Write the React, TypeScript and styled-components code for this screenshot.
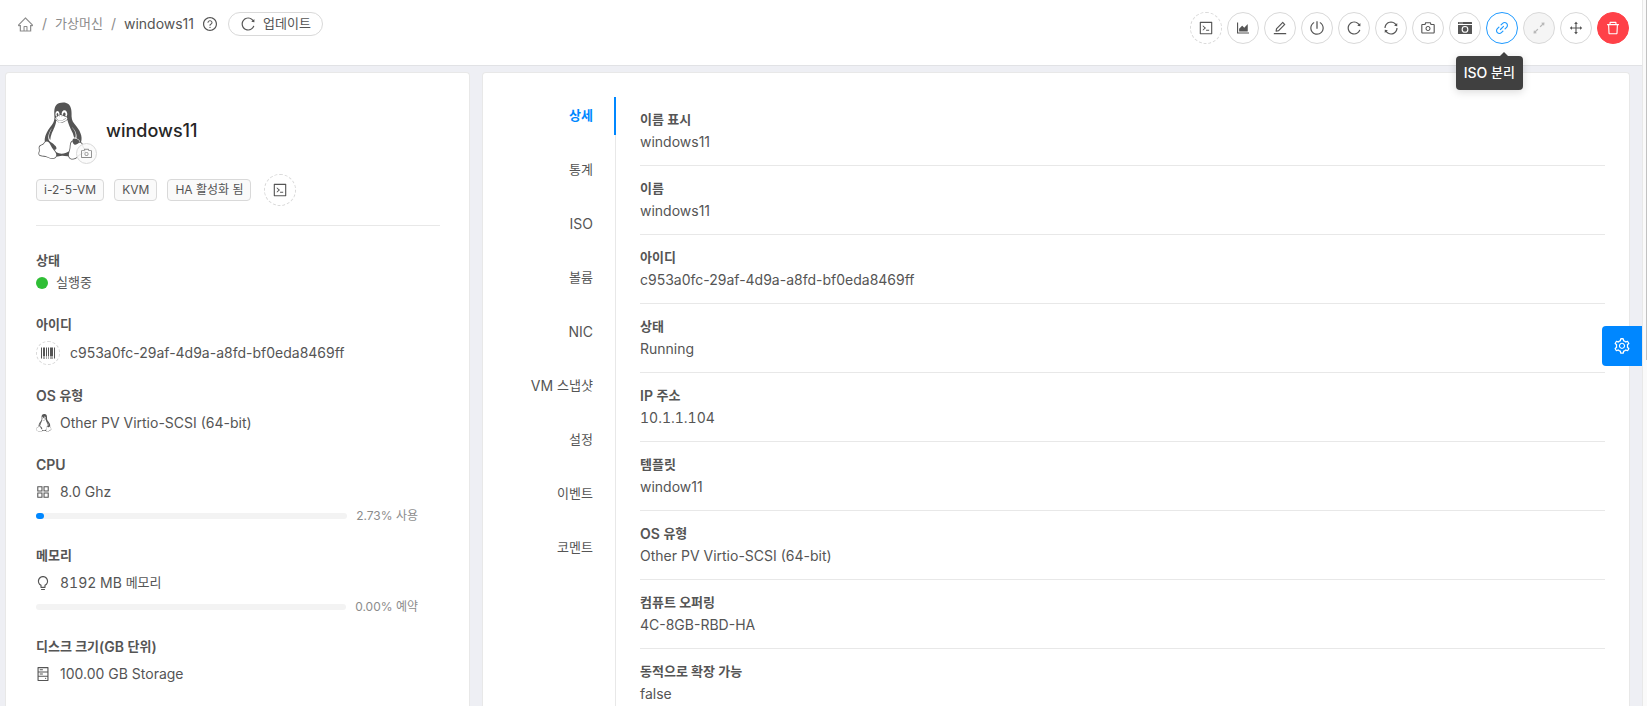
import React from 'react';
import styled, { createGlobalStyle, css } from 'styled-components';
import {
  AiOutlineHome, AiOutlineQuestionCircle, AiOutlineReload, AiOutlineCode, AiOutlineAreaChart,
  AiOutlineEdit, AiOutlinePoweroff, AiOutlineSync, AiOutlineCamera, AiOutlineLink,
  AiOutlineArrowsAlt, AiOutlineDrag, AiOutlineDelete, AiOutlineSetting, AiOutlineBarcode,
  AiOutlineAppstore, AiOutlineBulb, AiOutlineHdd,
} from 'react-icons/ai';
import { FaLinux } from 'react-icons/fa';

const colors = {
  text: '#555',
  muted: '#8c8c8c',
  strong: '#262626',
  primary: '#0087ff',
  danger: '#ff4148',
  border: '#d9d9d9',
  line: '#e8e8e8',
  page: '#eeeff4',
};

const GlobalStyle = createGlobalStyle`
  *, *::before, *::after { box-sizing: border-box; }
  body {
    margin: 0;
    background: #fff;
    color: ${colors.text};
    font: 14px/22px Inter, "Noto Sans CJK KR", sans-serif;
    overflow: hidden;
  }
  button { font: inherit; color: inherit; cursor: pointer; padding: 0; }
  a { color: inherit; text-decoration: none; }
  h1, dl, dt, dd { margin: 0; padding: 0; font: inherit; }
  svg { display: block; flex: none; }
`;

const Viewport = styled.div`
  display: flex;
  height: 100vh;
  overflow: hidden;
`;

const Page = styled.div`
  position: relative;
  flex: 1;
  min-width: 0;
  display: flex;
  flex-direction: column;
  background: ${colors.page};
`;

const ScrollTrack = styled.div`
  flex: none;
  width: 5px;
  background: #fafafa;
  border-left: 1px solid ${colors.line};
  display: flex;
  justify-content: flex-end;
`;

const ScrollThumb = styled.div`
  width: 1px;
  height: 51%;
  background: #c1c1c1;
`;

const Header = styled.header`
  display: flex;
  justify-content: space-between;
  align-items: flex-start;
  height: 66px;
  padding: 12px 13px 0 17px;
  background: #fff;
  border-bottom: 1px solid #e1e2e5;
`;

const Breadcrumb = styled.nav`
  display: flex;
  align-items: center;
  color: ${colors.muted};
  height: 24px;
  gap: 8px;
`;

const Current = styled.span`
  color: ${colors.text};
`;

const HelpLink = styled.a`
  color: ${colors.text};
`;

const UpdateButton = styled.button`
  display: flex;
  align-items: center;
  gap: 7px;
  height: 24px;
  margin-left: 2px;
  padding: 0 11px;
  border: 1px solid ${colors.border};
  border-radius: 12px;
  background: #fff;
  color: ${colors.text};
`;

const Hangul = styled.span`
  font-size: 13px;
  line-height: 1;
  vertical-align: 1px;
`;

const Actions = styled.div`
  display: flex;
  gap: 5px;
`;

type Kind = 'dashed' | 'active' | 'disabled' | 'danger';

const CircleButton = styled.button<{ $kind?: Kind; $size?: number }>`
  position: relative;
  display: flex;
  flex: none;
  align-items: center;
  justify-content: center;
  width: ${p => p.$size ?? 32}px;
  height: ${p => p.$size ?? 32}px;
  border: 1px solid ${colors.border};
  border-radius: 50%;
  background: #fff;
  ${p => p.$kind === 'dashed' && css`border-style: dashed;`}
  ${p => p.$kind === 'active' && css`border-color: #1f9aff; color: #1f9aff;`}
  ${p => p.$kind === 'disabled' && css`background: #f5f5f5; color: #b8b8b8;`}
  ${p => p.$kind === 'danger' && css`background: ${colors.danger}; border-color: ${colors.danger}; color: #fff;`}
`;

const Tooltip = styled.span`
  position: absolute;
  z-index: 2;
  top: 43px;
  right: -6px;
  height: 34px;
  padding: 6px 8px;
  border-radius: 4px;
  background: #404040;
  color: #fff;
  font-weight: 500;
  white-space: nowrap;
  box-shadow: 0 2px 8px rgba(0, 0, 0, 0.15);
  &::before {
    content: '';
    position: absolute;
    top: -4px;
    right: 15px;
    border: solid transparent;
    border-width: 0 4px 4px;
    border-bottom-color: #404040;
  }
`;

const Body = styled.main`
  flex: 1;
  min-height: 0;
  display: grid;
  grid-template-columns: minmax(0, 465fr) minmax(0, 1148fr);
  gap: 12px;
  padding: 6px 12px 0 5px;
`;

const Card = styled.section`
  overflow: hidden;
  background: #fff;
  border: 1px solid ${colors.line};
  border-bottom: 0;
  border-radius: 4px 4px 0 0;
`;

const InfoCard = styled(Card)`
  padding: 28px 29px 0 30px;
`;

const Identity = styled.div`
  display: flex;
  align-items: center;
  gap: 9px;
  height: 60px;
`;

const Avatar = styled.div`
  position: relative;
  width: 61px;
  height: 60px;
  padding: 1px 0 0 1px;
`;

const Penguin = styled(FaLinux)`
  width: 50px;
  height: 58px;
`;

const SmallPenguin = styled(FaLinux)`
  width: 16px;
  height: 18px;
`;

const AvatarBadge = styled.button`
  position: absolute;
  right: 0;
  bottom: -3px;
  display: flex;
  align-items: center;
  justify-content: center;
  width: 21px;
  height: 21px;
  border: 1px solid ${colors.border};
  border-radius: 50%;
  background: rgba(250, 250, 250, 0.85);
  color: ${colors.muted};
`;

const Name = styled.h1`
  color: ${colors.strong};
  font-size: 18px;
  font-weight: 500;
`;

const Tags = styled.div`
  display: flex;
  align-items: center;
  gap: 10px;
  padding: 13px 0 19px;
  border-bottom: 1px solid ${colors.line};
`;

const Tag = styled.span`
  height: 22px;
  padding: 0 7px;
  border: 1px solid ${colors.border};
  border-radius: 4px;
  background: #fafafa;
  font-size: 12px;
  line-height: 20px;
  & + button { margin-left: 3px; }
`;

const Facts = styled.dl`
  padding-top: 24px;
  display: flex;
  flex-direction: column;
  gap: 20px;
`;

const Label = styled.dt`
  font-weight: 600;
`;

const Value = styled.dd<{ $gap: number; $top?: number }>`
  display: flex;
  align-items: center;
  gap: ${p => p.$gap}px;
  padding-top: ${p => p.$top ?? 0}px;
`;

const IconSlot = styled.span`
  display: flex;
  justify-content: center;
  width: 14px;
`;

const Numeric = styled.span`
  font-variant-numeric: tabular-nums;
`;

const Dot = styled.span`
  width: 12px;
  height: 12px;
  border-radius: 50%;
  background: #2fbe35;
`;

const Usage = styled.dd`
  display: flex;
  align-items: center;
  gap: 9px;
  padding: 4px 22px 0 0;
  color: ${colors.muted};
  font-size: 12px;
  line-height: 18px;
`;

const Track = styled.div`
  flex: 1;
  height: 6px;
  border-radius: 3px;
  background: #f3f3f3;
`;

const Fill = styled.div`
  height: 6px;
  border-radius: 3px;
  background: ${colors.primary};
`;

const DetailCard = styled(Card)`
  display: flex;
  padding-top: 24px;
`;

const Tabs = styled.div`
  flex: none;
  width: 133px;
  display: flex;
  flex-direction: column;
  gap: 16px;
  border-right: 1px solid ${colors.line};
`;

const Tab = styled.button<{ $active?: boolean }>`
  height: 38px;
  margin-right: -1px;
  padding-right: 21px;
  border: 0;
  border-right: 2px solid ${p => (p.$active ? colors.primary : 'transparent')};
  background: none;
  color: ${p => (p.$active ? colors.primary : colors.text)};
  font-weight: ${p => (p.$active ? 600 : 400)};
  text-align: right;
`;

const Details = styled.dl`
  flex: 1;
  min-width: 0;
  padding: 0 24px;
`;

const Detail = styled.div`
  padding: 12px 0;
  border-bottom: 1px solid ${colors.line};
`;

const SettingsButton = styled.button`
  position: absolute;
  right: 0;
  top: 326px;
  display: flex;
  align-items: center;
  justify-content: center;
  width: 40px;
  height: 40px;
  border: 0;
  border-radius: 4px 0 0 4px;
  background: ${colors.primary};
  color: #fff;
`;

/* Hangul is set one pixel smaller than the Latin text around it. */
const Text = ({ children }: { children: string }) => (
  <>
    {children.split(/([가-힣]+(?: [가-힣]+)*)/).map((part, i) =>
      i % 2 ? <Hangul key={i}>{part}</Hangul> : part)}
  </>
);

const WindowCamera = () => (
  <svg width="14" height="14" viewBox="0 0 14 14" fill="currentColor" aria-hidden="true">
    <path d="M.5 1h13a.5.5 0 0 1 .5.5V3H0V1.500A.5.5 0 0 1 .5 1z" />
    <path fillRule="evenodd" d="M0 4h14v8.500a.5.5 0 0 1-.5.5H.5a.5.5 0 0 1-.5-.5zM7 5a3.400 3.400 0 1 0 0 6.800a3.400 3.400 0 0 0 0-6.800zM7 6.100a2.300 2.300 0 1 1 0 4.600a2.300 2.300 0 0 1 0-4.600z" />
    <path d="M1.500 1.500h1v1h-1zM3.500 1.500h1v1h-1z" fill="#fff" />
  </svg>
);

const actions: { label: string; icon: React.ReactNode; kind?: Kind }[] = [
  { label: '콘솔', icon: <AiOutlineCode size={16} />, kind: 'dashed' },
  { label: '통계', icon: <AiOutlineAreaChart size={16} /> },
  { label: '편집', icon: <AiOutlineEdit size={16} /> },
  { label: '정지', icon: <AiOutlinePoweroff size={16} /> },
  { label: '재부팅', icon: <AiOutlineReload size={16} /> },
  { label: '재설치', icon: <AiOutlineSync size={16} /> },
  { label: '스냅샷', icon: <AiOutlineCamera size={16} /> },
  { label: '볼륨 스냅샷', icon: <WindowCamera /> },
  { label: 'ISO 분리', icon: <AiOutlineLink size={16} />, kind: 'active' },
  { label: '확장', icon: <AiOutlineArrowsAlt size={16} />, kind: 'disabled' },
  { label: '이동', icon: <AiOutlineDrag size={16} /> },
  { label: '삭제', icon: <AiOutlineDelete size={16} />, kind: 'danger' },
];

const tabs = ['상세', '통계', 'ISO', '볼륨', 'NIC', 'VM 스냅샷', '설정', '이벤트', '코멘트'];

const details: { label: string; value: string; numeric?: boolean }[] = [
  { label: '이름 표시', value: 'windows11' },
  { label: '이름', value: 'windows11' },
  { label: '아이디', value: 'c953a0fc-29af-4d9a-a8fd-bf0eda8469ff' },
  { label: '상태', value: 'Running' },
  { label: 'IP 주소', value: '10.1.1.104', numeric: true },
  { label: '템플릿', value: 'window11' },
  { label: 'OS 유형', value: 'Other PV Virtio-SCSI (64-bit)' },
  { label: '컴퓨트 오퍼링', value: '4C-8GB-RBD-HA' },
  { label: '동적으로 확장 가능', value: 'false' },
];

export default function App() {
  return (
    <Viewport>
      <GlobalStyle />
      <Page>
        <Header>
          <Breadcrumb>
            <a href="#home" aria-label="홈"><AiOutlineHome size={17} /></a>
            <span>/</span>
            <a href="#vm"><Text>가상머신</Text></a>
            <span>/</span>
            <Current>windows11</Current>
            <HelpLink href="#help" aria-label="도움말"><AiOutlineQuestionCircle size={16} /></HelpLink>
            <UpdateButton><AiOutlineReload size={16} /><span><Text>업데이트</Text></span></UpdateButton>
          </Breadcrumb>
          <Actions>
            {actions.map(a => (
              <CircleButton key={a.label} $kind={a.kind} disabled={a.kind === 'disabled'} aria-label={a.label}>
                {a.icon}
                {a.kind === 'active' && <Tooltip role="tooltip"><Text>{a.label}</Text></Tooltip>}
              </CircleButton>
            ))}
          </Actions>
        </Header>
        <Body>
          <InfoCard>
            <Identity>
              <Avatar>
                <Penguin />
                <AvatarBadge aria-label="아이콘 변경"><AiOutlineCamera size={13} /></AvatarBadge>
              </Avatar>
              <Name>windows11</Name>
            </Identity>
            <Tags>
              <Tag>i-2-5-VM</Tag>
              <Tag>KVM</Tag>
              <Tag>HA 활성화 됨</Tag>
              <CircleButton $kind="dashed" aria-label="콘솔"><AiOutlineCode size={16} /></CircleButton>
            </Tags>
            <Facts>
              <div>
                <Label><Text>상태</Text></Label>
                <Value $gap={8}><Dot /><span><Text>실행중</Text></span></Value>
              </div>
              <div>
                <Label><Text>아이디</Text></Label>
                <Value $gap={10} $top={5}>
                  <CircleButton $kind="dashed" $size={24} aria-label="아이디 복사"><AiOutlineBarcode size={16} /></CircleButton>
                  c953a0fc-29af-4d9a-a8fd-bf0eda8469ff
                </Value>
              </div>
              <div>
                <Label><Text>OS 유형</Text></Label>
                <Value $gap={8} $top={5}><SmallPenguin />Other PV Virtio-SCSI (64-bit)</Value>
              </div>
              <div>
                <Label>CPU</Label>
                <Value $gap={10} $top={5}><IconSlot><AiOutlineAppstore size={16} /></IconSlot>8.0 Ghz</Value>
                <Usage><Track><Fill style={{ width: '2.73%' }} /></Track><span>2.73% 사용</span></Usage>
              </div>
              <div>
                <Label><Text>메모리</Text></Label>
                <Value $gap={10} $top={5}>
                  <IconSlot><AiOutlineBulb size={16} /></IconSlot>
                  <Numeric><Text>8192 MB 메모리</Text></Numeric>
                </Value>
                <Usage><Track /><span>0.00% 예약</span></Usage>
              </div>
              <div>
                <Label><Text>디스크 크기(GB 단위)</Text></Label>
                <Value $gap={10} $top={5}><IconSlot><AiOutlineHdd size={16} /></IconSlot>100.00 GB Storage</Value>
              </div>
            </Facts>
          </InfoCard>
          <DetailCard>
            <Tabs role="tablist">
              {tabs.map((t, i) => (
                <Tab key={t} role="tab" aria-selected={i === 0} $active={i === 0}><Text>{t}</Text></Tab>
              ))}
            </Tabs>
            <Details>
              {details.map(d => (
                <Detail key={d.label}>
                  <Label><Text>{d.label}</Text></Label>
                  <dd>{d.numeric ? <Numeric>{d.value}</Numeric> : d.value}</dd>
                </Detail>
              ))}
            </Details>
          </DetailCard>
        </Body>
        <SettingsButton aria-label="설정"><AiOutlineSetting size={18} /></SettingsButton>
      </Page>
      <ScrollTrack><ScrollThumb /></ScrollTrack>
    </Viewport>
  );
}
